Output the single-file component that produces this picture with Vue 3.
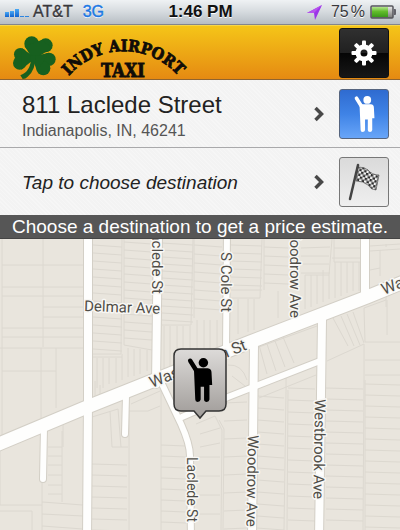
<script setup>
const roads = [
  { d: 'M88 230V400L87 540', w: 8 },
  { d: 'M44 428L43 479', w: 6 },
  { d: 'M126 396L125 434', w: 6 },
  { d: 'M158 230L156 384', w: 8 },
  { d: 'M162 384L181 424Q190 444 190 456L191 540', w: 6 },
  { d: 'M227 230L226 352', w: 6 },
  { d: 'M254 344L252 540', w: 8 },
  { d: 'M182 417L228 397L320 361', w: 6 },
  { d: 'M322 320L319 540', w: 8 },
  { d: 'M365 230V294', w: 8 },
  { d: 'M-6 446L87 407L250 342L367 297L406 281', w: 13 },
]

const rungs = (x1, x2, y1, y2, step, drop = 1) => {
  let d = ''
  for (let y = y1; y <= y2; y += step) d += `M${x1} ${y}L${x2} ${y + drop}`
  return d
}

const parcels = [
  'M2 239V440M43 239V347M2 265H83M2 287H83M2 296H83M43 307H83M43 317H83M2 328H83M2 337H83M0 348H83M56 348V408M41 348V420M2 371H56',
  rungs(93, 122, 245, 350, 8, 2),
  rungs(124, 152, 242, 345, 8, 2),
  'M122 239L121 354H93M124 239V345L152 350M93 357H122M97 358V388M103 358V388M109 358V384M116 358V383M122 354V380M128 348V377M134 349V376M140 349V374M147 350V371',
  rungs(162, 193, 243, 322, 7, 2),
  rungs(194, 222, 245, 316, 9, 2),
  'M193 239L191 325H162M164 326V370M170 326V366M177 326V350M183 326V350M190 326V350M197 320V350M204 320V350M210 320V350M217 320V350M194 239V318',
  rungs(231, 262, 245, 290, 8, 1),
  rungs(264, 288, 247, 290, 9, 1),
  'M262 239L260 298H231M264 239V290M231 290H262M248 299V332M254 299V330M278 291V318M238 299V334',
  'M301 248L330 247M301 256H329M301 264H329M301 273H330M332 239L329 275H305M334 239V262H361M332 258H361M334 248H361M305 275V309M311 275V307M317 275V304M323 270V302M329 275V299M335 262V298M341 262V296M347 262V293M353 262V291M359 262V291',
  'M370 246L400 244M370 251L400 249M380 250V276M386 247V244M370 270L380 268',
  'M386 285V300L364 308L365 342M386 300V307M333 318L348 346M341 316L354 346M347 314L360 345M353 312L364 343M327 361L364 344V380M365 342H400M365 360H400M365 375H400M387 300V335',
  'M259 345L267 374M267 344L276 371M275 341L285 367M283 337L294 363M259 347L317 326M286 377V392M259 398L316 375',
  rungs(257, 284, 396, 530, 12, 2),
  rungs(288, 315, 388, 530, 12, 1),
  rungs(326, 363, 388, 530, 11, 1),
  rungs(365, 400, 384, 530, 11, 1),
  'M286 392L284 530M288 390L287 530M364 380L363 530M365 380L365 530',
  'M196 424L215 416L222 430L221 530M219 420L224 429L223 530M200 434L220 428M200 447L220 443',
  rungs(195, 220, 457, 530, 19, 0),
  rungs(224, 247, 403, 530, 18, -1),
  'M228 365Q242 364 247 380M232 376L245 386',
  'M62 431V502M48 447H62M48 456H62M48 465H62M48 475H62M48 485H62M48 494H62M42 482V530M0 505H42M0 511H32V530M42 502L83 505M42 514L83 516M42 526L83 529M63 424V447M0 450V505',
  rungs(92, 127, 464, 530, 11, 1),
  'M129 410V530M110 411L112 447H128M118 409L121 447M92 417L118 409M131 404L160 391M129 411L148 411L160 406M161 390V530',
  rungs(161, 186, 445, 530, 11, 1),
  'M95 402V381M100 398V385',
].join('')

const teeth = [0, 45, 90, 135, 180, 225, 270, 315]
const bars = [5, 6, 8, 1, 1]
</script>

<template>
  <main class="screen">
    <svg class="defs" aria-hidden="true">
      <defs>
        <symbol id="hailer" viewBox="64 54 76 136">
          <path d="M73 65L91 94" fill="none" stroke="currentColor" stroke-width="13" stroke-linecap="round" />
          <circle cx="112" cy="71" r="14" fill="currentColor" />
          <path d="M84 88L92 87H125Q136 88 136 99L138 137H130V180Q129 187 122 187Q114 187 114 180V142H104V180Q103 187 95 187Q88 187 88 180Z" fill="currentColor" />
        </symbol>
      </defs>
    </svg>

    <div class="status">
      <div class="carrier">
        <span class="signal"><i v-for="(h, n) in bars" :key="n" :style="{ height: h + 'px' }"></i></span>
        <span>AT&amp;T</span>
        <span class="network">3G</span>
      </div>
      <div class="clock">1:46 PM</div>
      <div class="power">
        <svg class="locate" viewBox="0 0 15 15" aria-hidden="true">
          <path d="M15 0L8 15L7 8L0 8Z" fill="#9c35e8" />
          <path d="M15 0L7 8L0 8Z" fill="#b653ee" />
        </svg>
        <span>75<span class="percent">%</span></span>
        <svg class="battery" viewBox="0 0 26 14" aria-hidden="true">
          <defs>
            <linearGradient id="charge" x2="0" y2="1">
              <stop offset="0" stop-color="#b3e38b" /><stop offset=".45" stop-color="#62bd2c" /><stop offset="1" stop-color="#3c991a" />
            </linearGradient>
            <linearGradient id="drained" x2="0" y2="1">
              <stop offset="0" stop-color="#eee" /><stop offset="1" stop-color="#777" />
            </linearGradient>
          </defs>
          <rect x="1" y="1" width="22" height="12" rx="1" fill="url(#drained)" stroke="#56565c" stroke-width="1.5" />
          <rect x="2" y="2" width="16" height="10" fill="url(#charge)" />
          <path d="M24 4h1q1 0 1 1v4q0 1-1 1h-1z" fill="#62626a" />
        </svg>
      </div>
    </div>

    <header class="brand">
      <svg class="logo" viewBox="0 0 180 54" role="img" aria-label="Indy Airport Taxi">
        <g fill="#17601f" transform="translate(-5 2) scale(.3333)">
          <circle cx="80" cy="47" r="22" />
          <circle cx="122" cy="52" r="21" />
          <path d="M59 54L84 96L142 60L110 36Z" />
          <circle cx="46" cy="79" r="19" />
          <circle cx="44" cy="105" r="20" />
          <path d="M50 60L92 90L48 125Z" />
          <circle cx="132" cy="94" r="20" />
          <circle cx="115" cy="121" r="21" />
          <path d="M132 74L80 86L96 128Z" />
          <path d="M78 82H92Q92 128 68 146Q62 153 53 153L46 142Q80 130 78 82Z" />
        </g>
        <path id="arch" d="M57 52A73 73 0 0 1 170 52" fill="none" />
        <text class="wordmark arched"><textPath href="#arch" startOffset="50%" text-anchor="middle">INDY AIRPORT</textPath></text>
        <text class="wordmark straight" x="113" y="51" text-anchor="middle">TAXI</text>
      </svg>
      <button class="tile settings" type="button" aria-label="Settings">
        <svg viewBox="-13 -13 26 26" width="26" height="26" aria-hidden="true">
          <g fill="#fff">
            <rect v-for="a in teeth" :key="a" x="-2" y="-12.5" width="4" height="6" rx="1" :transform="`rotate(${a})`" />
          </g>
          <circle r="6" fill="none" stroke="#fff" stroke-width="5" />
        </svg>
      </button>
    </header>

    <section class="row">
      <button class="place" type="button">
        <span class="lines"><strong>811 Laclede Street</strong><small>Indianapolis, IN, 46241</small></span>
        <svg class="chevron" viewBox="0 0 10 16" aria-hidden="true"><path d="M1.5 2L7.5 8L1.5 14" /></svg>
      </button>
      <button class="tile pickup" type="button" aria-label="Pickup location">
        <svg width="21" height="38" aria-hidden="true"><use href="#hailer" /></svg>
      </button>
    </section>

    <section class="row second">
      <button class="place" type="button">
        <em>Tap to choose destination</em>
        <svg class="chevron" viewBox="0 0 10 16" aria-hidden="true"><path d="M1.5 2L7.5 8L1.5 14" /></svg>
      </button>
      <button class="tile dropoff" type="button" aria-label="Destination">
        <svg viewBox="0 0 32 38" width="32" height="38" aria-hidden="true">
          <defs>
            <pattern id="checks" width="5" height="5" patternUnits="userSpaceOnUse" patternTransform="rotate(14)">
              <rect width="5" height="5" fill="#f6f6f6" /><path d="M0 0h2.5v2.5H0zM2.5 2.5h2.5v2.5H2.5z" fill="#2c2c2c" />
            </pattern>
          </defs>
          <path d="M10 4Q17 4 20 7Q24 12 31 12L28 27Q23 27 20 22Q15 18 8 18Z" fill="url(#checks)" stroke="#555" stroke-width=".7" />
          <path d="M10 2L2 36" stroke="#444" stroke-width="2.5" stroke-linecap="round" />
        </svg>
      </button>
    </section>

    <p class="hint">Choose a destination to get a price estimate.</p>

    <section class="map" aria-label="Map">
      <svg class="streets" viewBox="0 239 400 291">
        <path :d="parcels" fill="none" stroke="#dcd8d0" />
        <g fill="none" stroke="#d3cfc6" stroke-linecap="round">
          <path v-for="r in roads" :key="r.d" :d="r.d" :stroke-width="r.w + 2" />
        </g>
        <g fill="none" stroke="#fefefd" stroke-linecap="round">
          <path v-for="r in roads" :key="r.d" :d="r.d" :stroke-width="r.w" />
        </g>
        <g class="labels">
          <text transform="translate(84 311) rotate(2)">Delmar Ave</text>
          <text transform="translate(152 294) rotate(90)" text-anchor="end">Laclede St</text>
          <text transform="translate(221 252) rotate(90)">S Cole St</text>
          <text transform="translate(290 318) rotate(90)" text-anchor="end">Woodrow Ave</text>
          <text transform="translate(315 399) rotate(91)">Westbrook Ave</text>
          <text transform="translate(248 435) rotate(91)">Woodrow Ave</text>
          <text class="minor" transform="translate(187 457) rotate(90)">Laclede St</text>
          <text class="major" transform="translate(152 388) rotate(-22)">Washington St</text>
          <text class="major" transform="translate(384 295) rotate(-22)">Washington St</text>
        </g>
      </svg>
      <button class="marker" type="button" aria-label="Pickup pin">
        <svg viewBox="0 0 54 72" aria-hidden="true">
          <defs>
            <linearGradient id="pin" x2="0" y2="1">
              <stop offset="0" stop-color="#dddbd9" /><stop offset="1" stop-color="#9f9b98" />
            </linearGradient>
          </defs>
          <path d="M8 1H46Q53 1 53 8V56Q53 63 46 63H33L27 70L21 63H8Q1 63 1 56V8Q1 1 8 1Z" fill="url(#pin)" stroke="#333" stroke-width="1.5" />
          <use href="#hailer" x="14" y="9" width="26" height="46" color="#000" />
        </svg>
      </button>
    </section>
  </main>
</template>

<style>
body {
  margin: 0;
  background: #e9e5dd;
}
</style>

<style scoped>
.screen {
  font-family: "Liberation Sans", Arial, sans-serif;
  color: #222;
  overflow: hidden;
}
.defs {
  position: absolute;
  width: 0;
  height: 0;
}
button {
  font: inherit;
  color: inherit;
  padding: 0;
  border: 0;
  background: none;
  cursor: pointer;
}
.status {
  display: grid;
  grid-template-columns: 1fr auto 1fr;
  align-items: center;
  box-sizing: border-box;
  height: 25px;
  padding: 0 4px 0 5px;
  border-bottom: 1px solid #84868a;
  background: linear-gradient(#eff2f4, #d5dade 50%, #b7bdc3);
  text-shadow: 0 1px 0 #fff;
}
.carrier,
.power {
  display: flex;
  align-items: center;
}
.carrier {
  gap: 4px;
  font-size: 16px;
  color: #38383c;
  -webkit-text-stroke: 0.4px currentColor;
}
.signal {
  display: flex;
  align-items: flex-end;
  gap: 1px;
  height: 9px;
}
.signal i {
  width: 4px;
  background: linear-gradient(#48a8f4, #1263cf);
}
.network {
  margin-left: 6px;
  color: #1c78e4;
}
.clock {
  font-size: 17px;
  font-weight: bold;
  color: #111;
}
.power {
  justify-content: flex-end;
  gap: 5px;
  font-size: 16px;
  color: #38383c;
}
.percent {
  margin-left: 2px;
}
.locate {
  width: 15px;
  height: 15px;
  margin-right: 4px;
}
.battery {
  width: 26px;
  height: 14px;
}
.brand {
  display: flex;
  align-items: center;
  justify-content: space-between;
  box-sizing: border-box;
  height: 55px;
  padding: 0 11px 0 10px;
  border-top: 1px solid #f7d64a;
  border-bottom: 1px solid #8f6430;
  background: linear-gradient(#f5c518, #e58a12);
}
.logo {
  width: 180px;
  height: 54px;
  overflow: visible;
}
.wordmark {
  font-family: "DejaVu Serif Condensed", "DejaVu Serif", serif;
  font-weight: bold;
  fill: #100c08;
  stroke: #100c08;
  stroke-width: 0.8px;
}
.arched {
  font-size: 16px;
}
.straight {
  font-size: 18px;
}
.tile {
  display: flex;
  flex: none;
  align-items: center;
  justify-content: center;
  box-sizing: border-box;
  width: 50px;
  height: 50px;
  border: 1px solid #777;
  border-radius: 3px;
}
.settings {
  border-color: #111;
  background: linear-gradient(#303030, #202020 50%, #050505 50%, #171717);
}
.pickup {
  border-color: #56657f;
  color: #fff;
  background: linear-gradient(#2f6bd0, #3f83e6 50%, #68a5f8);
}
.dropoff {
  background: linear-gradient(#dadada, #efefef);
}
.row {
  display: flex;
  align-items: center;
  gap: 15px;
  box-sizing: border-box;
  height: 68px;
  padding: 0 11px 0 22px;
  border-bottom: 1px solid #a9a9ab;
  background: repeating-linear-gradient(45deg, #f6f6f6 0 1px, #f3f3f3 1px 3px);
}
.second {
  height: 67px;
  border-bottom: 0;
}
.place {
  display: flex;
  flex: 1;
  align-items: center;
  justify-content: space-between;
  text-align: left;
}
.lines {
  display: grid;
  padding-top: 6px;
}
.lines strong {
  font-size: 24px;
  font-weight: normal;
  line-height: 28px;
}
.lines small {
  font-size: 16px;
  line-height: 24px;
  color: #555;
}
.place em {
  padding-top: 2px;
  font-size: 19px;
  line-height: 24px;
}
.chevron {
  width: 10px;
  height: 16px;
  fill: none;
  stroke: #484848;
  stroke-width: 3.5;
}
.hint {
  margin: 0;
  border-bottom: 1px solid #444;
  background: #565656;
  color: #fff;
  font-size: 19px;
  line-height: 23px;
  text-align: center;
  white-space: nowrap;
}
.map {
  position: relative;
  background: #e9e5dd;
}
.streets {
  display: block;
  width: 100%;
}
.labels {
  font-family: Roboto, sans-serif;
  font-size: 15px;
  fill: #504e48;
  stroke: #f8f7f4;
  stroke-width: 3px;
  stroke-linejoin: round;
  paint-order: stroke;
}
.minor {
  font-size: 14px;
}
.major {
  font-size: 16px;
}
.marker {
  position: absolute;
  left: 50%;
  top: 37.5%;
  width: 54px;
  transform: translateX(-50%);
}
.marker svg {
  display: block;
  width: 100%;
}
</style>
